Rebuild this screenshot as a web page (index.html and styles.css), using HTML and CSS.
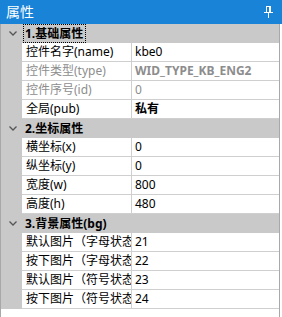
FILE: index.html
```html
<!DOCTYPE html>
<html lang="zh-CN">
<head>
  <meta charset="UTF-8">
  <title>属性</title>
  <link rel="stylesheet" href="styles.css">
</head>
<body>
  <div class="panel">
    <div class="title-bar">
      <span class="title">属性</span>
      <svg class="pin" width="9" height="12" viewBox="0 0 9 12">
        <rect x="2.5" y="0.5" width="4" height="6" fill="none" stroke="#fff"/>
        <rect x="5" y="1" width="1" height="5" fill="#fff"/>
        <rect x="0" y="6" width="9" height="1" fill="#fff"/>
        <rect x="4" y="7" width="1" height="5" fill="#fff"/>
      </svg>
    </div>

    <div class="grid">
      <div class="category">
        <span class="toggle"><svg width="8" height="5" viewBox="0 0 8 5"><polyline points="0.5,0.5 4,4 7.5,0.5" fill="none" stroke="#555" stroke-width="1.3"/></svg></span>
        <span class="cat-label focused">1.基础属性</span>
      </div>
      <div class="row"><span class="margin"></span><span class="name">控件名字(name)</span><span class="value">kbe0</span></div>
      <div class="row"><span class="margin"></span><span class="name disabled">控件类型(type)</span><span class="value disabled bold">WID_TYPE_KB_ENG2</span></div>
      <div class="row"><span class="margin"></span><span class="name disabled">控件序号(id)</span><span class="value disabled">0</span></div>
      <div class="row"><span class="margin"></span><span class="name">全局(pub)</span><span class="value bold">私有</span></div>

      <div class="category">
        <span class="toggle"><svg width="8" height="5" viewBox="0 0 8 5"><polyline points="0.5,0.5 4,4 7.5,0.5" fill="none" stroke="#555" stroke-width="1.3"/></svg></span>
        <span class="cat-label">2.坐标属性</span>
      </div>
      <div class="row"><span class="margin"></span><span class="name">横坐标(x)</span><span class="value">0</span></div>
      <div class="row"><span class="margin"></span><span class="name">纵坐标(y)</span><span class="value">0</span></div>
      <div class="row"><span class="margin"></span><span class="name">宽度(w)</span><span class="value">800</span></div>
      <div class="row"><span class="margin"></span><span class="name">高度(h)</span><span class="value">480</span></div>

      <div class="category">
        <span class="toggle"><svg width="8" height="5" viewBox="0 0 8 5"><polyline points="0.5,0.5 4,4 7.5,0.5" fill="none" stroke="#555" stroke-width="1.3"/></svg></span>
        <span class="cat-label">3.背景属性(bg)</span>
      </div>
      <div class="row"><span class="margin"></span><span class="name">默认图片（字母状态）</span><span class="value">21</span></div>
      <div class="row"><span class="margin"></span><span class="name">按下图片（字母状态）</span><span class="value">22</span></div>
      <div class="row"><span class="margin"></span><span class="name">默认图片（符号状态）</span><span class="value">23</span></div>
      <div class="row"><span class="margin"></span><span class="name">按下图片（符号状态）</span><span class="value">24</span></div>

      <div class="empty"></div>
    </div>
  </div>
</body>
</html>
```

FILE: styles.css
```css
body {
  margin: 0;
  padding: 0;
  background-color: #fff;
  font-family: "Noto Sans", "Noto Sans CJK SC", sans-serif;
  font-size: 12px;
  color: #000;
}

.panel {
  width: 282px;
  height: 317px;
  display: flex;
  flex-direction: column;
  overflow: hidden;
}

.title-bar {
  height: 24px;
  background-color: #1883d7;
  display: flex;
  align-items: center;
  justify-content: space-between;
  padding: 0 9px 0 6px;
  flex-shrink: 0;
}

.title {
  color: #fff;
  font-size: 14px;
  line-height: 24px;
}

.pin {
  display: block;
}

.grid {
  flex: 1;
  width: 278px;
  border-left: 1px solid #a8a8a8;
  border-right: 1px solid #a8a8a8;
  display: flex;
  flex-direction: column;
}

.category {
  height: 19px;
  background-color: #c9c9c9;
  display: flex;
  align-items: center;
}

.toggle {
  width: 21px;
  display: flex;
  justify-content: center;
  padding-left: 1px;
}

.toggle svg {
  display: block;
}

.cat-label {
  font-weight: bold;
  line-height: 17px;
  padding: 0 2px 0 1px;
  border: 1px dotted transparent;
}

.cat-label.focused {
  border-color: #000;
}

.row {
  height: 18px;
  display: flex;
  border-bottom: 1px solid #cfcfcf;
}

.row .margin {
  width: 21px;
  flex-shrink: 0;
  background-color: #c9c9c9;
  margin-bottom: -1px;
}

.name {
  width: 105px;
  flex-shrink: 0;
  padding-left: 4px;
  border-right: 1px solid #cfcfcf;
  line-height: 18px;
  white-space: nowrap;
  overflow: hidden;
}

.value {
  flex: 1;
  padding-left: 3px;
  line-height: 18px;
  white-space: nowrap;
  overflow: hidden;
}

.disabled {
  color: #8d8d8d;
}

.bold {
  font-weight: bold;
}

.empty {
  flex: 1;
}
```
